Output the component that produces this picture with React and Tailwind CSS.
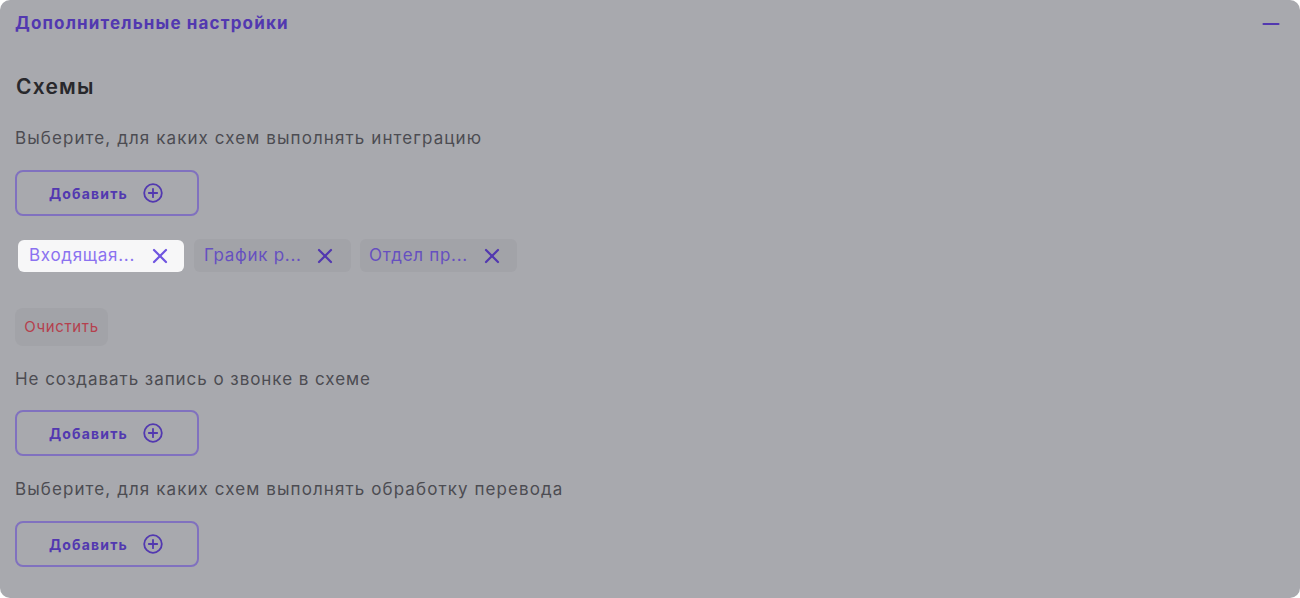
import React from 'react';
import { X, Minus } from 'lucide-react';

const font = 'font-["Inter","Noto_Sans",sans-serif]';

const PlusCircle = () => (
  <svg width="20" height="20" viewBox="0 0 20 20" fill="none" stroke="#5238b0" strokeWidth="1.8" strokeLinecap="round">
    <circle cx="10" cy="10" r="8.8" />
    <path d="M10 5.8v8.4M5.8 10h8.4" />
  </svg>
);

const AddButton = () => (
  <button className="flex items-center justify-center gap-[15px] w-[184px] h-[46px] pr-[2px] rounded-lg border-2 border-[#8071bf] text-[14px] font-bold tracking-[1.15px] text-[#5238b0]">
    Добавить
    <PlusCircle />
  </button>
);

const Chip = ({ label, active, className }) => (
  <div
    className={`flex items-center justify-between rounded-md text-[17px] tracking-[0.7px] ${className} ${
      active
        ? 'w-[166px] h-[32px] bg-[#f7f7f8] text-[#8b72f0]'
        : 'w-[157px] h-[33px] bg-[#a2a3a8] text-[#6650c0]'
    }`}
  >
    <span>{label}</span>
    <X size={24} strokeWidth={2.2} className={active ? 'text-[#6f55e0]' : 'text-[#5238b0]'} />
  </div>
);

export default function App() {
  return (
    <div className={`${font} h-[598px] w-[1300px] overflow-hidden bg-white`}>
      <div className="h-full rounded-[10px] bg-[#a8a9ae] pl-[15px] pr-[16px]">
        <div className="flex items-center justify-between h-[47px]">
          <span className="text-[17px] font-bold tracking-[1.15px] text-[#5238b0]">Дополнительные настройки</span>
          <Minus size={26} strokeWidth={1.85} className="text-[#5238b0]" />
        </div>
        <h2 className="mt-[25px] ml-px text-[21px] leading-[30px] font-semibold tracking-[1.2px] text-[#28282c]">Схемы</h2>
        <p className="mt-[24px] text-[17px] leading-[24px] tracking-[1.09px] text-[#4c4c52]">Выберите, для каких схем выполнять интеграцию</p>
        <div className="mt-[20px]">
          <AddButton />
        </div>
        <div className="mt-[23px] ml-[3px] flex items-end gap-[9px]">
          <Chip label="Входящая..." active className="mr-px pl-[11px] pr-[12px]" />
          <Chip label="График р..." className="pl-[10px] pr-[14px]" />
          <Chip label="Отдел пр..." className="pl-[9px] pr-[13px]" />
        </div>
        <button className="mt-[36px] block w-[93px] h-[38px] rounded-lg bg-[#a2a3a8] text-[15px] tracking-[0.65px] text-[#b5404d]">Очистить</button>
        <p className="mt-[21px] text-[17px] leading-[24px] tracking-[0.95px] text-[#4c4c52]">Не создавать запись о звонке в схеме</p>
        <div className="mt-[19px]">
          <AddButton />
        </div>
        <p className="mt-[21px] text-[17px] leading-[24px] tracking-[1.09px] text-[#4c4c52]">Выберите, для каких схем выполнять обработку перевода</p>
        <div className="mt-[20px]">
          <AddButton />
        </div>
      </div>
    </div>
  );
}
